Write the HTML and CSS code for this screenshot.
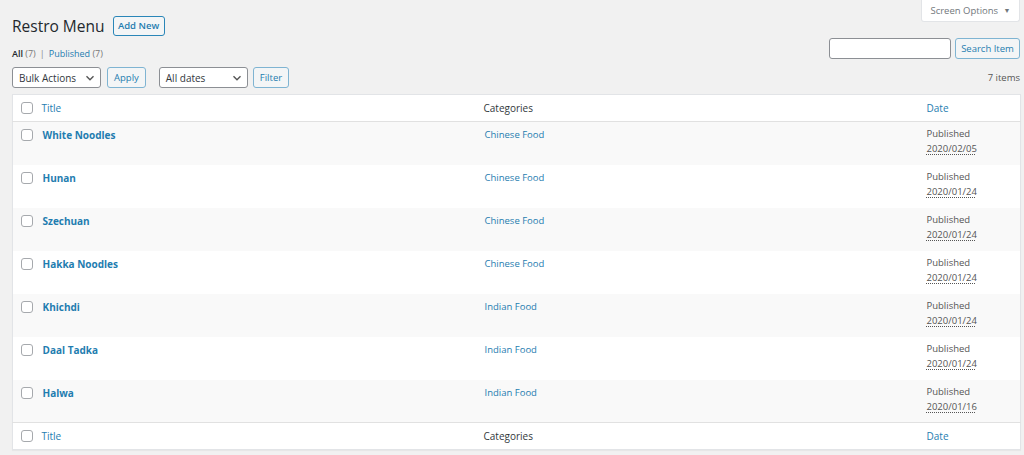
FILE: index.html
```html
<!DOCTYPE html>
<html>
<head>
<meta charset="utf-8">
<link rel="stylesheet" href="styles.css">
</head>
<body>
<div class="wrap">
  <div class="screen-options">Screen Options <span class="tri">▼</span></div>
  <div class="heading">
    <h1>Restro Menu</h1>
    <a class="btn add-new">Add New</a>
  </div>
  <div class="filters-row">
    <ul class="subsubsub">
      <li class="current">All <span class="count">(7)</span></li>
      <li class="sep">|</li>
      <li><a>Published</a> <span class="count">(7)</span></li>
    </ul>
    <div class="search-box">
      <div class="input"></div>
      <a class="btn">Search Item</a>
    </div>
  </div>
  <div class="tablenav">
    <div class="actions">
      <div class="select sel-bulk">Bulk Actions <svg viewBox="0 0 10 10" width="10" height="10"><path d="M1.5 3.2 L5 6.7 L8.5 3.2" fill="none" stroke="#555" stroke-width="1.4"/></svg></div>
      <a class="btn">Apply</a>
    </div>
    <div class="actions">
      <div class="select sel-dates">All dates <svg viewBox="0 0 10 10" width="10" height="10"><path d="M1.5 3.2 L5 6.7 L8.5 3.2" fill="none" stroke="#555" stroke-width="1.4"/></svg></div>
      <a class="btn">Filter</a>
    </div>
    <div class="count-items">7 items</div>
  </div>
  <table class="list">
    <colgroup>
      <col class="c-cb"><col class="c-title"><col class="c-cat"><col class="c-date">
    </colgroup>
    <thead>
      <tr><td class="cb"><span class="box"></span></td><th class="link">Title</th><th>Categories</th><th class="link">Date</th></tr>
    </thead>
    <tbody>
      <tr class="alt"><td class="cb"><span class="box"></span></td><td class="title">White Noodles</td><td class="cat">Chinese Food</td><td class="date">Published<br><span class="d">2020/02/05</span></td></tr>
      <tr><td class="cb"><span class="box"></span></td><td class="title">Hunan</td><td class="cat">Chinese Food</td><td class="date">Published<br><span class="d">2020/01/24</span></td></tr>
      <tr class="alt"><td class="cb"><span class="box"></span></td><td class="title">Szechuan</td><td class="cat">Chinese Food</td><td class="date">Published<br><span class="d">2020/01/24</span></td></tr>
      <tr><td class="cb"><span class="box"></span></td><td class="title">Hakka Noodles</td><td class="cat">Chinese Food</td><td class="date">Published<br><span class="d">2020/01/24</span></td></tr>
      <tr class="alt"><td class="cb"><span class="box"></span></td><td class="title">Khichdi</td><td class="cat">Indian Food</td><td class="date">Published<br><span class="d">2020/01/24</span></td></tr>
      <tr><td class="cb"><span class="box"></span></td><td class="title">Daal Tadka</td><td class="cat">Indian Food</td><td class="date">Published<br><span class="d">2020/01/24</span></td></tr>
      <tr class="alt"><td class="cb"><span class="box"></span></td><td class="title">Halwa</td><td class="cat">Indian Food</td><td class="date">Published<br><span class="d">2020/01/16</span></td></tr>
    </tbody>
    <tfoot>
      <tr><td class="cb"><span class="box"></span></td><th class="link">Title</th><th>Categories</th><th class="link">Date</th></tr>
    </tfoot>
  </table>
</div>
</body>
</html>
```
FILE: styles.css
```css
* { box-sizing: border-box; }
html, body { margin: 0; padding: 0; }
body {
  background: #f1f1f1;
  font-family: "Open Sans", "Noto Sans", sans-serif;
  color: #444;
  font-size: 10px;
  width: 1024px;
  height: 455px;
  overflow: hidden;
}
.wrap { padding: 0 4px 0 12px; }
a { color: #1f7db0; text-decoration: none; }

.screen-options {
  float: right;
  height: 22px;
  width: 99px;
  background: #fff;
  border: 1px solid #e2e4e7;
  border-top: none;
  border-radius: 0 0 3px 3px;
  color: #72777c;
  font-size: 9.5px;
  line-height: 21px;
  text-align: center;
}
.screen-options .tri { font-size: 7px; margin-left: 3px; position: relative; top: -1px; }

.heading { display: flex; align-items: center; gap: 8px; padding-top: 15px; height: 36px; }
h1 { margin: 0; font-size: 15.5px; font-weight: 400; color: #23282d; line-height: 20px; }

.btn {
  display: inline-flex; align-items: center; justify-content: center;
  height: 21px; padding: 0 6px;
  border: 1px solid #2a86b8;
  border-radius: 3px;
  background: #f3f5f6;
  color: #1f7db0;
  font-size: 9.5px;
  line-height: 1;
}
.add-new { font-weight: 600; font-size: 9.5px; height: 20px; width: 52px; padding: 0; }

.filters-row { display: flex; justify-content: space-between; align-items: flex-start; margin-top: 2px; height: 21px; }
.subsubsub { list-style: none; margin: 10px 0 0; padding: 0; display: flex; gap: 4px; font-size: 9px; line-height: 12px; color: #666; }
.subsubsub .current { color: #23282d; font-weight: 600; }
.subsubsub .count { color: #777; font-weight: 400; }
.subsubsub .sep { color: #888; }
.search-box { display: flex; gap: 4px; }
.search-box .input { width: 122px; height: 21px; background: #fff; border: 1px solid #8c8f94; border-radius: 3px; }
.search-box .btn { height: 21px; width: 65px; padding: 0; border-color: #7fb4d2; }

.tablenav { display: flex; align-items: center; height: 21px; margin-top: 8px; gap: 13px; }
.actions { display: flex; gap: 6px; align-items: center; }
.select {
  display: flex; align-items: center; justify-content: space-between;
  height: 21px; background: #fff; border: 1px solid #8c8f94; border-radius: 3px;
  padding: 0 5px 0 6px; color: #32373c; font-size: 10px;
}
.sel-bulk { width: 89px; }
.sel-dates { width: 89px; }
.tablenav .btn { border-color: #7fb4d2; height: 21px; }
.tablenav .actions:nth-child(2) { gap: 5px; }
.count-items { margin-left: auto; font-size: 9.5px; color: #555; }

table.list {
  width: 1008px;
  margin-top: 6px;
  border-collapse: collapse;
  table-layout: fixed;
  background: #fff;
  border: 1px solid #e2e4e7;
  box-shadow: 0 1px 1px rgba(0,0,0,.04);
}
.c-cb { width: 22px; }
.c-title { width: 442px; }
.c-cat { width: 442px; }
.c-date { width: 102px; }
thead tr, tfoot tr { height: 27px; }
thead tr { border-bottom: 1px solid #e1e1e1; }
tfoot tr { border-top: 1px solid #e1e1e1; }
th { text-align: left; font-weight: 400; font-size: 10px; color: #32373c; padding: 0 8px 0 7px; vertical-align: middle; }
th.link { color: #1f7db0; }
th:last-child { padding-left: 8px; }
td { padding: 6px 8px 0; vertical-align: top; font-size: 9.5px; }
td.cb { padding: 0 0 0 8px; vertical-align: middle; }
tbody td.cb { vertical-align: top; padding-top: 7px; }
tbody tr { height: 43px; }
tbody tr.alt { background: #f9f9f9; }
.box {
  display: block; width: 12px; height: 12px;
  border: 1px solid #a6a9ad; border-radius: 3px; background: #fff;
}
td.title { color: #1f7db0; font-weight: 700; font-size: 10px; padding-left: 8px; }
td.cat { color: #1f7db0; }
td.date { color: #555; line-height: 15px; padding-top: 4px; }
td.date .d { text-decoration: underline; text-decoration-style: dotted; text-underline-offset: 2px; }
```
